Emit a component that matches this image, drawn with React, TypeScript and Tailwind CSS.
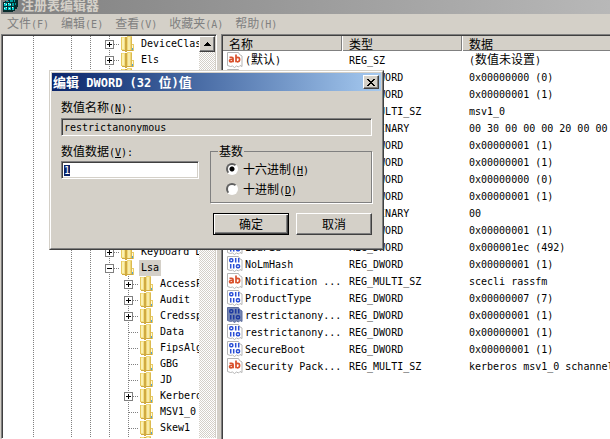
import { useEffect, useRef, useState } from "react";

type ValueType = "REG_SZ" | "REG_DWORD" | "REG_MULTI_SZ" | "REG_BINARY";

type RegValue = {
  name: string;
  type: ValueType;
  data: string;
  selected?: boolean;
};

type TreeNode = {
  name: string;
  depth: number;
  state: "closed" | "open" | "leaf";
  selected?: boolean;
};

const MENUS = ["文件(F)", "编辑(E)", "查看(V)", "收藏夹(A)", "帮助(H)"];

const TREE: TreeNode[] = [
  { name: "DeviceClasses", depth: 0, state: "closed" },
  { name: "Els", depth: 0, state: "closed" },
  { name: "Errata", depth: 0, state: "closed" },
  { name: "FileSystem", depth: 0, state: "closed" },
  { name: "GraphicsDrivers", depth: 0, state: "closed" },
  { name: "GroupOrderList", depth: 0, state: "leaf" },
  { name: "HAL", depth: 0, state: "closed" },
  { name: "hivelist", depth: 0, state: "leaf" },
  { name: "HotPatch", depth: 0, state: "closed" },
  { name: "IDConfigDB", depth: 0, state: "closed" },
  { name: "IPMI", depth: 0, state: "closed" },
  { name: "Keyboard", depth: 0, state: "closed" },
  { name: "Keyboard Layout", depth: 0, state: "closed" },
  { name: "Keyboard Layouts", depth: 0, state: "closed" },
  { name: "Lsa", depth: 0, state: "open", selected: true },
  { name: "AccessProviders", depth: 1, state: "closed" },
  { name: "Audit", depth: 1, state: "closed" },
  { name: "Credssp", depth: 1, state: "closed" },
  { name: "Data", depth: 1, state: "leaf" },
  { name: "FipsAlgorithmPolicy", depth: 1, state: "leaf" },
  { name: "GBG", depth: 1, state: "leaf" },
  { name: "JD", depth: 1, state: "leaf" },
  { name: "Kerberos", depth: 1, state: "closed" },
  { name: "MSV1_0", depth: 1, state: "leaf" },
  { name: "Skew1", depth: 1, state: "leaf" },
  { name: "SSO", depth: 1, state: "closed" },
];

const VALUES: RegValue[] = [
  { name: "(默认)", type: "REG_SZ", data: "(数值未设置)" },
  { name: "auditbasedire...", type: "REG_DWORD", data: "0x00000000 (0)" },
  { name: "auditbaseobjects", type: "REG_DWORD", data: "0x00000001 (1)" },
  { name: "Authenticatio...", type: "REG_MULTI_SZ", data: "msv1_0" },
  { name: "Bounds", type: "REG_BINARY", data: "00 30 00 00 00 20 00 00" },
  { name: "crashonauditfail", type: "REG_DWORD", data: "0x00000001 (1)" },
  { name: "disabledomain...", type: "REG_DWORD", data: "0x00000001 (1)" },
  { name: "everyoneinclu...", type: "REG_DWORD", data: "0x00000000 (0)" },
  { name: "forceguest", type: "REG_DWORD", data: "0x00000001 (1)" },
  { name: "fullprivilege...", type: "REG_BINARY", data: "00" },
  { name: "LimitBlankPas...", type: "REG_DWORD", data: "0x00000001 (1)" },
  { name: "LsaPid", type: "REG_DWORD", data: "0x000001ec (492)" },
  { name: "NoLmHash", type: "REG_DWORD", data: "0x00000001 (1)" },
  { name: "Notification ...", type: "REG_MULTI_SZ", data: "scecli rassfm" },
  { name: "ProductType", type: "REG_DWORD", data: "0x00000007 (7)" },
  { name: "restrictanony...", type: "REG_DWORD", data: "0x00000001 (1)", selected: true },
  { name: "restrictanony...", type: "REG_DWORD", data: "0x00000001 (1)" },
  { name: "SecureBoot", type: "REG_DWORD", data: "0x00000001 (1)" },
  { name: "Security Pack...", type: "REG_MULTI_SZ", data: "kerberos msv1_0 schannel" },
];

// Latin runs are set two pixels smaller so that they take half a Chinese cell.
function Mixed({ text }: { text: string }) {
  return (
    <>
      {text.split(/([\x20-\x7e]+)/).map((part, i) =>
        i % 2 === 1 ? (
          <span key={i} className="whitespace-pre font-['DejaVu_Sans_Mono',monospace] text-[10px]">
            {part}
          </span>
        ) : (
          part
        )
      )}
    </>
  );
}

function Mnemonic({ text, letter, colon }: { text: string; letter: string; colon?: boolean }) {
  return (
    <>
      {text}
      <span className="font-['DejaVu_Sans_Mono',monospace] text-[10px]">
        (<u>{letter}</u>){colon && ":"}
      </span>
    </>
  );
}

function RegeditIcon() {
  return (
    <svg width="16" height="16" viewBox="0 0 16 16" className="shrink-0" shapeRendering="crispEdges">
      <path d="M0 5h2V4h3V3h3V2h2V1h2V0h4v3h-1v7h-1v2h-2v2h-2v1H0z" fill="#062c2c" />
      <path d="M1 6h3v3H1zM5 6h3v3H5zM1 10h3v3H1zM5 10h3v3H5zM9 10h2v3H9z" fill="#00c8c8" />
      <path d="M3 4h3v1H3zM7 3h3v2H7zM9 6h2v3H9zM12 1h3v1h-3zM11 3h1v2h-1zM12 6h1v2h-1z" fill="#00a0a0" />
      <path d="M1 6h1v1H1zM3 7h1v1H3zM5 6h1v1H5zM7 7h1v1H7zM1 11h1v1H1zM3 10h1v1H3zM6 11h1v1H6zM9 10h1v1H9zM13 1h1v1h-1z" fill="#d8ffff" />
    </svg>
  );
}

function FolderIcon() {
  return (
    <svg width="16" height="16" viewBox="0 0 16 16" className="shrink-0" shapeRendering="crispEdges">
      <path d="M1 1h6v14H2v-1H1z" fill="#f3df84" />
      <path d="M2 2h2v11H2z" fill="#fbf1b4" />
      <path d="M1 1h1v13H1z" fill="#e6c95e" />
      <path d="M5 1h2v15H5z" fill="#d0aa42" />
      <path d="M7 0h5v15H7z" fill="#efd878" />
      <path d="M8 1h2v13H8z" fill="#f8ebaa" />
      <path d="M11 1h1v13h-1z" fill="#dcba50" />
      <path d="M12 8h2v7h-2z" fill="#e8cc68" />
      <path d="M12 9h1v5h-1z" fill="#fdf8d8" />
      <path d="M12 12h1v2h-1z" fill="#4fa3d7" />
      <path d="M1 14h5v1H2zM7 14h6v1H7z" fill="#d0aa42" />
    </svg>
  );
}

function ValueIcon({ type, selected }: { type: ValueType; selected?: boolean }) {
  const isText = type === "REG_SZ" || type === "REG_MULTI_SZ";
  return (
    <svg width="16" height="16" viewBox="0 0 16 16" className="shrink-0">
      <path
        d="M.5.5h11l1 2 2.500 1.500v10.500l-2-1-1.500 1.500-2-1-2 1.500-2-1.500-2 .5-3-1z"
        fill={selected ? "#7586b4" : "#fff"}
        stroke={selected ? "#5c6c9c" : "#b4b4b4"}
      />
      {isText ? (
        <g fill="none" stroke="#d9512c" strokeWidth="1.700">
          <path d="M2.500 5.400h2.200q1.400 0 1.400 1.400v3.400M6 7.500H4q-1.500 0-1.500 1.200T4 9.900q1.500 0 2-1" />
          <path d="M9 2.500v7.700M9 6.200q.7-.8 1.700-.8 1.900 0 1.900 2.200t-1.900 2.200Q9.700 9.800 9 9" />
        </g>
      ) : (
        <g fill="none" stroke={selected ? "#1c38a0" : "#2a4fd6"} strokeWidth="1.500">
          <rect x="2.800" y="2.800" width="3" height="3" rx="1" />
          <path d="M8.700 2v4.500M11.700 2v4.500M3.700 8v4.500M6.700 8v4.500" />
          <rect x="9.500" y="8.800" width="3" height="3" rx="1" />
        </g>
      )}
    </svg>
  );
}

function Guide({ line }: { line: boolean }) {
  return (
    <span className="flex w-[19px] shrink-0 self-stretch pl-[9px]">
      {line && (
        <span className="w-px bg-[repeating-linear-gradient(#808080_0_1px,transparent_1px_2px)]" />
      )}
    </span>
  );
}

function Branch({ state }: { state: TreeNode["state"] }) {
  const lines = (
    <svg width="19" height="16" viewBox="0 0 19 16" shapeRendering="crispEdges" stroke="#808080">
      <path d="M9.500 0v16M10 8.500h9" strokeDasharray="1 1" fill="none" />
      {state !== "leaf" && (
        <>
          <rect x="5.500" y="4.500" width="8" height="8" fill="#fff" />
          <path d="M7 8.500h5" stroke="#000" />
          {state === "closed" && <path d="M9.500 6v5" stroke="#000" />}
        </>
      )}
    </svg>
  );
  if (state === "leaf") return <span className="shrink-0">{lines}</span>;
  return (
    <button aria-label={state === "open" ? "折叠" : "展开"} className="shrink-0">
      {lines}
    </button>
  );
}

function TreeRow({ name, depth, state, selected }: TreeNode) {
  return (
    <li className="flex h-4 items-center pl-[21px]">
      <Guide line />
      <Guide line={false} />
      <Guide line />
      <Guide line />
      {depth > 0 && <Guide line />}
      <Branch state={state} />
      <span className="pl-px">
        <FolderIcon />
      </span>
      <span
        className={`ml-[3px] px-[2px] font-['DejaVu_Sans_Mono',monospace] text-[10px] leading-4 whitespace-nowrap ${
          selected ? "bg-[#d4d0c8]" : ""
        }`}
      >
        {name}
      </span>
    </li>
  );
}

function KeyTree() {
  return (
    <nav className="flex w-[216px] shrink-0 border border-t-[#808080] border-r-white border-b-white border-l-[#808080] bg-white pt-px pr-px pl-px shadow-[inset_1px_1px_0_#404040,inset_-1px_0_0_#d4d0c8]">
      <ul className="min-w-0 flex-1 overflow-hidden">
        {TREE.map((node) => (
          <TreeRow key={node.name} {...node} />
        ))}
      </ul>
      <div className="w-4 shrink-0 bg-[repeating-conic-gradient(#d4d0c8_0_25%,#fff_0_50%)] bg-[length:2px_2px]">
        <button
          aria-label="向上滚动"
          className="flex h-4 w-4 items-center justify-center border border-t-white border-r-[#404040] border-b-[#404040] border-l-white bg-[#d4d0c8] shadow-[inset_-1px_-1px_0_#808080]"
        >
          <svg width="7" height="4" viewBox="0 0 7 4" shapeRendering="crispEdges">
            <path d="M3 0h1v1h1v1h1v1h1v1H0V3h1V2h1V1h1z" />
          </svg>
        </button>
      </div>
    </nav>
  );
}

function ValueList() {
  return (
    <div className="min-w-0 flex-1 overflow-hidden border-t border-l border-[#808080] bg-white pt-px pl-px shadow-[inset_1px_1px_0_#404040]">
      <table className="w-full table-fixed border-collapse text-left">
        <thead>
          <tr>
            {["名称", "类型", "数据"].map((title, i) => (
              <th
                key={title}
                className={`h-4 p-0 align-top font-normal ${i < 2 ? "w-[120px] pr-px" : ""}`}
              >
                <div
                  className={`h-[15px] border-b border-[#808080] bg-[#d4d0c8] pl-[6px] leading-[15px] ${
                    i < 2 ? "border-r" : ""
                  }`}
                >
                  {title}
                </div>
              </th>
            ))}
          </tr>
        </thead>
        <tbody>
          {VALUES.map((value, i) => (
            <tr key={i} className="leading-[14px] whitespace-nowrap">
              <td className="p-0">
                <div className="flex h-[17px] gap-[2px] pl-1">
                  <ValueIcon type={value.type} selected={value.selected} />
                  <span>
                    <Mixed text={value.name} />
                  </span>
                </div>
              </td>
              <td className="p-0">
                <div className="h-[17px] pl-[6px]">
                  <Mixed text={value.type} />
                </div>
              </td>
              <td className="p-0">
                <div className="h-[17px] pl-[6px]">
                  <Mixed text={value.data} />
                </div>
              </td>
            </tr>
          ))}
        </tbody>
      </table>
    </div>
  );
}

const SUNKEN =
  "border border-t-[#808080] border-r-white border-b-white border-l-[#808080] shadow-[inset_1px_1px_0_#404040,inset_-1px_-1px_0_#d4d0c8] font-['DejaVu_Sans_Mono',monospace] text-[10px] leading-[13px] outline-none";

const RADIO =
  "h-3 w-3 appearance-none rounded-full border-2 border-t-[#606060] border-r-white border-b-white border-l-[#606060] bg-white checked:bg-[radial-gradient(circle,#000_2px,#fff_3px)]";

function EditDialog() {
  const [data, setData] = useState("1");
  const [base, setBase] = useState("hex");
  const dataRef = useRef<HTMLInputElement>(null);

  useEffect(() => {
    dataRef.current?.focus();
    dataRef.current?.select();
  }, []);

  return (
    <div
      role="dialog"
      aria-labelledby="dialog-title"
      className="absolute top-[70px] left-[49px] w-[335px] border border-t-[#d4d0c8] border-r-[#404040] border-b-[#404040] border-l-[#d4d0c8] bg-[#d4d0c8]"
    >
      <div className="border border-t-white border-r-[#808080] border-b-[#808080] border-l-white p-px">
        <header className="flex h-[18px] items-center justify-between bg-linear-to-r from-[#0a246a] to-[#a6caf0] pr-[2px] pl-px">
          <h2
            id="dialog-title"
            className="text-[13px] leading-[18px] font-bold whitespace-pre text-white"
          >
            编辑<span className="font-['DejaVu_Sans_Mono',monospace] text-[12px]"> DWORD (32 </span>位
            <span className="font-['DejaVu_Sans_Mono',monospace] text-[12px]">)</span>值
          </h2>
          <button
            aria-label="关闭"
            className="flex h-[14px] w-4 items-center justify-center border border-t-white border-r-[#404040] border-b-[#404040] border-l-white bg-[#d4d0c8] shadow-[inset_-1px_-1px_0_#808080]"
          >
            <svg width="8" height="7" viewBox="0 0 8 7" shapeRendering="crispEdges">
              <path d="M0 0h2v1h1v1h2V1h1V0h2v1H7v1H6v1H5v1h1v1h1v1h1v1H6V6H5V5H3v1H2v1H0V6h1V5h1V4h1V3H2V2H1V1H0z" />
            </svg>
          </button>
        </header>

        <form onSubmit={(e) => e.preventDefault()} className="flex flex-col px-[9px] pt-2 pb-3">
          <label htmlFor="value-name" className="leading-4">
            <Mnemonic text="数值名称" letter="N" colon />
          </label>
          <input
            id="value-name"
            readOnly
            value="restrictanonymous"
            className={`mt-px h-[18px] w-full bg-[#d4d0c8] pl-[2px] ${SUNKEN}`}
          />

          <div className="mt-[7px] flex gap-[11px]">
            <div className="flex flex-1 flex-col">
              <label htmlFor="value-data" className="leading-4">
                <Mnemonic text="数值数据" letter="V" colon />
              </label>
              <input
                id="value-data"
                ref={dataRef}
                value={data}
                onChange={(e) => setData(e.target.value)}
                className={`h-[18px] w-full bg-white pl-[2px] selection:bg-[#0a246a] selection:text-white ${SUNKEN}`}
              />
            </div>
            <fieldset className="h-[60px] w-[162px] border border-[#808080] px-[15px] shadow-[1px_1px_0_#fff]">
              <legend className="-ml-2 px-px leading-4">基数</legend>
              <label className="flex h-5 items-center gap-[5px]">
                <input
                  type="radio"
                  name="base"
                  className={RADIO}
                  checked={base === "hex"}
                  onChange={() => setBase("hex")}
                />
                <span>
                  <Mnemonic text="十六进制" letter="H" />
                </span>
              </label>
              <label className="flex h-5 items-center gap-[5px]">
                <input
                  type="radio"
                  name="base"
                  className={RADIO}
                  checked={base === "dec"}
                  onChange={() => setBase("dec")}
                />
                <span>
                  <Mnemonic text="十进制" letter="D" />
                </span>
              </label>
            </fieldset>
          </div>

          <div className="mt-[10px] flex justify-end gap-[7px]">
            <button
              type="submit"
              className="h-[22px] w-[76px] border border-black bg-[#d4d0c8] leading-5 shadow-[inset_1px_1px_0_#fff,inset_-1px_-1px_0_#404040,inset_-2px_-2px_0_#808080]"
            >
              确定
            </button>
            <button
              type="button"
              className="h-[22px] w-[76px] border border-t-white border-r-[#404040] border-b-[#404040] border-l-white bg-[#d4d0c8] leading-5 shadow-[inset_-1px_-1px_0_#808080]"
            >
              取消
            </button>
          </div>
        </form>
      </div>
    </div>
  );
}

export default function App() {
  return (
    <div className="relative flex h-screen flex-col overflow-hidden bg-[#d4d0c8] font-['Noto_Sans_CJK_SC',sans-serif] text-xs text-black">
      <header className="ml-px flex h-[14px] shrink-0 items-end gap-[2px] overflow-hidden bg-linear-to-r from-[#808080] to-[#b8b8b8] pb-px pl-[2px]">
        <RegeditIcon />
        <h1 className="text-[13px] leading-[17px] font-bold text-[#d4d0c8]">注册表编辑器</h1>
      </header>

      <nav className="flex h-5 shrink-0 items-center pl-px">
        {MENUS.map((menu) => (
          <button key={menu} className="px-[6px] leading-5 text-[#808080]">
            <Mixed text={menu} />
          </button>
        ))}
      </nav>

      <main className="flex min-h-0 flex-1 gap-1 pl-px">
        <KeyTree />
        <ValueList />
      </main>

      <EditDialog />
    </div>
  );
}
